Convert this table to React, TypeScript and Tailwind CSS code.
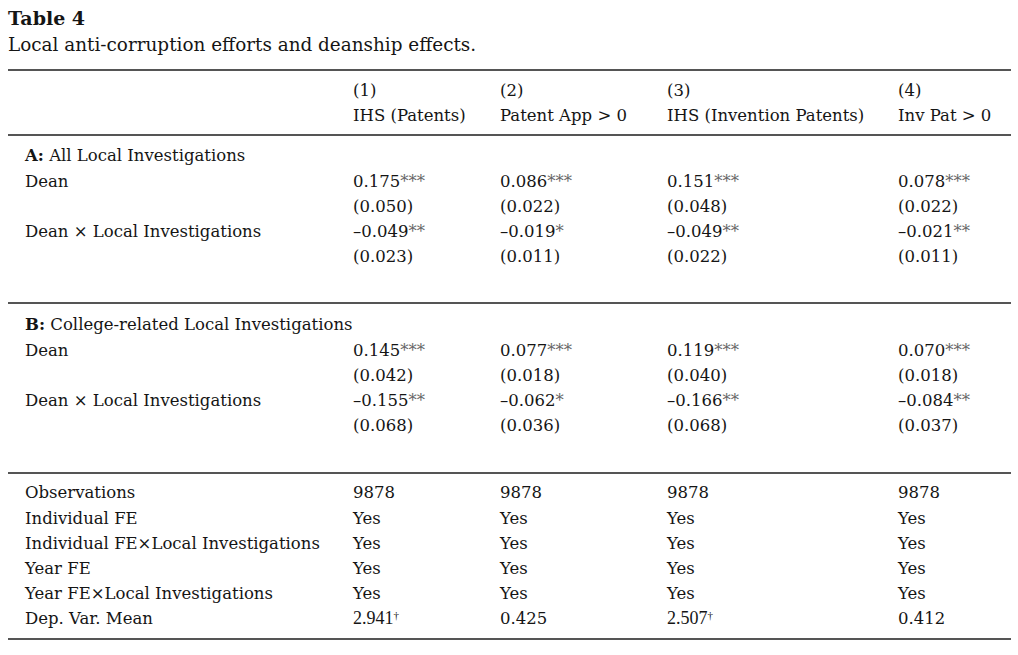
import React from "react";

const body = "font-['DejaVu_Serif',serif]";

type Row = { label?: React.ReactNode; cells?: React.ReactNode[] };

function Star({ s }: { s: string }) {
  return <span className="text-[#666]">{s}</span>;
}

function Val({ v, s }: { v: string; s?: string }) {
  return (
    <span>
      {v}
      {s ? <Star s={s} /> : null}
    </span>
  );
}

function Dagger({ v }: { v: string }) {
  return (
    <span className="font-['Liberation_Serif',serif] text-[18px]">
      {v}
      <sup className="text-[11px]">†</sup>
    </span>
  );
}

function Rule() {
  return <div className="h-[2px] bg-[#555]" />;
}

function TRow({ label, cells }: Row) {
  return (
    <div className="grid grid-cols-[345px_147px_167px_231px_1fr] h-[25.2px] leading-[25px] items-center whitespace-nowrap">
      <div className="pl-[17px]">{label}</div>
      {[0, 1, 2, 3].map((i) => (
        <div key={i}>{cells ? cells[i] : null}</div>
      ))}
    </div>
  );
}

export default function App() {
  const yes = ["Yes", "Yes", "Yes", "Yes"];
  return (
    <div className={`${body} bg-white text-[#151515] w-[1018px] h-[655px] px-[8px] pt-[5px] text-[16.5px]`}>
      <div className="font-bold text-[19px] leading-[26px]">Table 4</div>
      <div className="text-[18.4px] leading-[28px] mb-[10px]">
        Local anti-corruption efforts and deanship effects.
      </div>
      <div className="w-[1003px]">
        <Rule />
        <div className="pt-[7px] pb-[6px]">
          <TRow cells={["(1)", "(2)", "(3)", "(4)"]} />
          <TRow
            cells={["IHS (Patents)", "Patent App > 0", "IHS (Invention Patents)", "Inv Pat > 0"]}
          />
        </div>
        <Rule />
        <div className="pt-[7px] pb-[33px]">
          <TRow
            label={
              <span>
                <b>A:</b> All Local Investigations
              </span>
            }
          />
          <TRow
            label="Dean"
            cells={[
              <Val v="0.175" s="***" />,
              <Val v="0.086" s="***" />,
              <Val v="0.151" s="***" />,
              <Val v="0.078" s="***" />,
            ]}
          />
          <TRow cells={["(0.050)", "(0.022)", "(0.048)", "(0.022)"]} />
          <TRow
            label="Dean × Local Investigations"
            cells={[
              <Val v="–0.049" s="**" />,
              <Val v="–0.019" s="*" />,
              <Val v="–0.049" s="**" />,
              <Val v="–0.021" s="**" />,
            ]}
          />
          <TRow cells={["(0.023)", "(0.011)", "(0.022)", "(0.011)"]} />
        </div>
        <Rule />
        <div className="pt-[8px] pb-[34px]">
          <TRow
            label={
              <span>
                <b>B:</b> College-related Local Investigations
              </span>
            }
          />
          <TRow
            label="Dean"
            cells={[
              <Val v="0.145" s="***" />,
              <Val v="0.077" s="***" />,
              <Val v="0.119" s="***" />,
              <Val v="0.070" s="***" />,
            ]}
          />
          <TRow cells={["(0.042)", "(0.018)", "(0.040)", "(0.018)"]} />
          <TRow
            label="Dean × Local Investigations"
            cells={[
              <Val v="–0.155" s="**" />,
              <Val v="–0.062" s="*" />,
              <Val v="–0.166" s="**" />,
              <Val v="–0.084" s="**" />,
            ]}
          />
          <TRow cells={["(0.068)", "(0.036)", "(0.068)", "(0.037)"]} />
        </div>
        <Rule />
        <div className="pt-[6px] pb-[7px]">
          <TRow label="Observations" cells={["9878", "9878", "9878", "9878"]} />
          <TRow label="Individual FE" cells={yes} />
          <TRow label="Individual FE×Local Investigations" cells={yes} />
          <TRow label="Year FE" cells={yes} />
          <TRow label="Year FE×Local Investigations" cells={yes} />
          <TRow
            label="Dep. Var. Mean"
            cells={[<Dagger v="2.941" />, "0.425", <Dagger v="2.507" />, "0.412"]}
          />
        </div>
        <Rule />
      </div>
    </div>
  );
}
